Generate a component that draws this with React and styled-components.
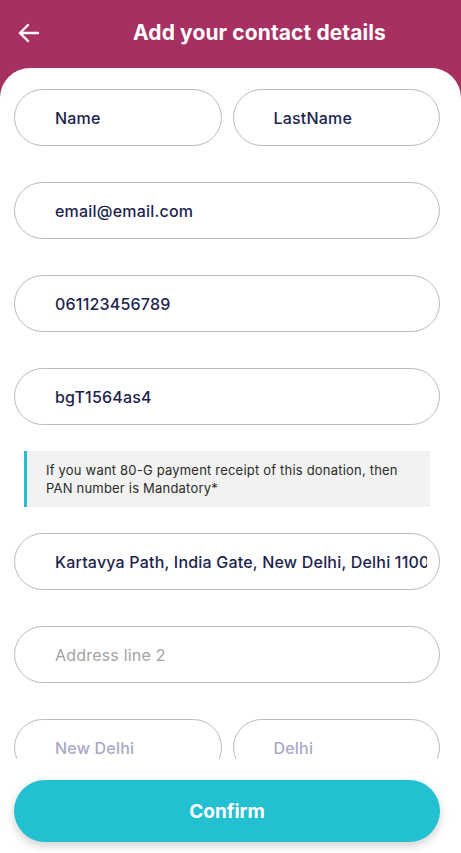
import React from 'react';
import styled, { createGlobalStyle } from 'styled-components';

const GlobalStyle = createGlobalStyle`
  * { box-sizing: border-box; }
  body {
    margin: 0;
    background: #ffffff;
    font-family: 'Inter', 'Open Sans', sans-serif;
  }
`;

const Page = styled.div`
  height: 853px;
  overflow: hidden;
  background-color: #a82f62;
  display: flex;
  flex-direction: column;
`;

const Header = styled.header`
  display: flex;
  align-items: center;
  flex-shrink: 0;
  height: 68px;
  padding: 0 0 3px 17px;
  color: #ffffff;
`;

const BackBtn = styled.button`
  display: flex;
  align-items: center;
  padding: 0;
  width: 24px;
  height: 24px;
  background: none;
  border: none;
  color: #ffffff;
  cursor: pointer;
`;

const Title = styled.h1`
  margin: 0 0 0 92px;
  font-size: 21px;
  font-weight: 700;
  letter-spacing: 0.1px;
`;

const Sheet = styled.main`
  flex: 1;
  display: flex;
  flex-direction: column;
  gap: 36px;
  padding: 21px 21px 77px 14px;
  overflow: hidden;
  background-color: #ffffff;
  border-radius: 30px 30px 0 0;
`;

const Row = styled.div`
  display: flex;
  flex-shrink: 0;
  gap: 11px;

  & > input {
    flex: 1;
  }
`;

const Field = styled.input`
  flex-shrink: 0;
  min-width: 0;
  width: 100%;
  height: 57px;
  padding: 0 12px 0 40px;
  border: 1px solid #bcbcbc;
  border-radius: 30px;
  background: #ffffff;
  font-family: inherit;
  font-size: 16px;
  font-weight: 500;
  letter-spacing: 0.2px;
  color: #1d1f4e;
  outline: none;

  &::placeholder {
    color: ${(p) => (p.$muted ? '#a9a9c5' : '#a3a3a3')};
    font-weight: ${(p) => (p.$muted ? 500 : 400)};
  }
`;

const Note = styled.div`
  flex-shrink: 0;
  margin: -10px 10px -10px 10px;
  padding: 10px 16px 10px 19px;
  background-color: #f2f2f2;
  border-left: 3px solid #25bfcf;
  font-size: 13px;
  line-height: 18px;
  letter-spacing: 0.2px;
  color: #2b2b2b;
`;

const Footer = styled.footer`
  position: fixed;
  left: 0;
  right: 0;
  bottom: 0;
  padding: 21px 21px 11px 14px;
  background-color: #ffffff;
`;

const ConfirmBtn = styled.button`
  width: 100%;
  height: 62px;
  border: none;
  border-radius: 31px;
  background-color: #22c0d0;
  color: #ffffff;
  font-family: inherit;
  font-size: 19px;
  font-weight: 700;
  box-shadow: 0 4px 10px rgba(0, 0, 0, 0.18);
  cursor: pointer;
`;

const ArrowIcon = () => (
  <svg width="24" height="24" viewBox="0 0 24 24" fill="none" stroke="currentColor" strokeWidth="2.4" strokeLinecap="round" strokeLinejoin="round">
    <path d="M21 12H3" />
    <path d="M11 4l-8 8 8 8" />
  </svg>
);

const App = () => {
  return (
    <>
      <GlobalStyle />
      <Page>
        <Header>
          <BackBtn aria-label="Back">
            <ArrowIcon />
          </BackBtn>
          <Title>Add your contact details</Title>
        </Header>
        <Sheet>
          <Row>
            <Field readOnly defaultValue="Name" />
            <Field readOnly defaultValue="LastName" />
          </Row>
          <Field readOnly defaultValue="email@email.com" />
          <Field readOnly defaultValue="061123456789" />
          <Field readOnly defaultValue="bgT1564as4" />
          <Note>
            If you want 80-G payment receipt of this donation, then PAN number is Mandatory*
          </Note>
          <Field readOnly defaultValue="Kartavya Path, India Gate, New Delhi, Delhi 110001" />
          <Field placeholder="Address line 2" />
          <Row>
            <Field $muted placeholder="New Delhi" />
            <Field $muted placeholder="Delhi" />
          </Row>
        </Sheet>
        <Footer>
          <ConfirmBtn>Confirm</ConfirmBtn>
        </Footer>
      </Page>
    </>
  );
};

export default App;
